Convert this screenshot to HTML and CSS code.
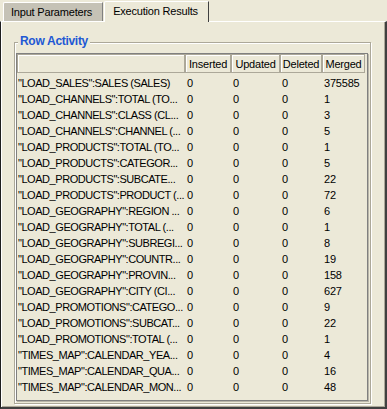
FILE: index.html
```html
<!DOCTYPE html>
<html lang="en">
<head>
  <meta charset="UTF-8">
  <title>Execution Results</title>
  <link rel="stylesheet" href="styles.css">
</head>
<body>
  <div class="tabs">
    <div class="tab">Input Parameters</div>
    <div class="tab tab-active">Execution Results</div>
  </div>

  <div class="panel">
    <div class="group">
      <div class="group-title">Row Activity</div>
      <div class="grid-wrap">
        <table class="grid">
          <thead>
            <tr>
              <th class="c-name"></th>
              <th class="c-ins">Inserted</th>
              <th class="c-upd">Updated</th>
              <th class="c-del">Deleted</th>
              <th class="c-mrg">Merged</th>
            </tr>
          </thead>
          <tbody>
            <tr><td>"LOAD_SALES":SALES (SALES)</td><td>0</td><td>0</td><td>0</td><td>375585</td></tr>
            <tr><td>"LOAD_CHANNELS":TOTAL (TO...</td><td>0</td><td>0</td><td>0</td><td>1</td></tr>
            <tr><td>"LOAD_CHANNELS":CLASS (CL...</td><td>0</td><td>0</td><td>0</td><td>3</td></tr>
            <tr><td>"LOAD_CHANNELS":CHANNEL (...</td><td>0</td><td>0</td><td>0</td><td>5</td></tr>
            <tr><td>"LOAD_PRODUCTS":TOTAL (TO...</td><td>0</td><td>0</td><td>0</td><td>1</td></tr>
            <tr><td>"LOAD_PRODUCTS":CATEGOR...</td><td>0</td><td>0</td><td>0</td><td>5</td></tr>
            <tr><td>"LOAD_PRODUCTS":SUBCATE...</td><td>0</td><td>0</td><td>0</td><td>22</td></tr>
            <tr><td>"LOAD_PRODUCTS":PRODUCT (...</td><td>0</td><td>0</td><td>0</td><td>72</td></tr>
            <tr><td>"LOAD_GEOGRAPHY":REGION ...</td><td>0</td><td>0</td><td>0</td><td>6</td></tr>
            <tr><td>"LOAD_GEOGRAPHY":TOTAL (...</td><td>0</td><td>0</td><td>0</td><td>1</td></tr>
            <tr><td>"LOAD_GEOGRAPHY":SUBREGI...</td><td>0</td><td>0</td><td>0</td><td>8</td></tr>
            <tr><td>"LOAD_GEOGRAPHY":COUNTR...</td><td>0</td><td>0</td><td>0</td><td>19</td></tr>
            <tr><td>"LOAD_GEOGRAPHY":PROVIN...</td><td>0</td><td>0</td><td>0</td><td>158</td></tr>
            <tr><td>"LOAD_GEOGRAPHY":CITY (CI...</td><td>0</td><td>0</td><td>0</td><td>627</td></tr>
            <tr><td>"LOAD_PROMOTIONS":CATEGO...</td><td>0</td><td>0</td><td>0</td><td>9</td></tr>
            <tr><td>"LOAD_PROMOTIONS":SUBCAT...</td><td>0</td><td>0</td><td>0</td><td>22</td></tr>
            <tr><td>"LOAD_PROMOTIONS":TOTAL (...</td><td>0</td><td>0</td><td>0</td><td>1</td></tr>
            <tr><td>"TIMES_MAP":CALENDAR_YEA...</td><td>0</td><td>0</td><td>0</td><td>4</td></tr>
            <tr><td>"TIMES_MAP":CALENDAR_QUA...</td><td>0</td><td>0</td><td>0</td><td>16</td></tr>
            <tr><td>"TIMES_MAP":CALENDAR_MON...</td><td>0</td><td>0</td><td>0</td><td>48</td></tr>
          </tbody>
        </table>
      </div>
    </div>
  </div>
</body>
</html>
```

FILE: styles.css
```css
body {
  margin: 0;
  width: 387px;
  height: 409px;
  overflow: hidden;
  background: #ECE9D8;
  font-family: "Liberation Sans", Arial, sans-serif;
  font-size: 11px;
  letter-spacing: -0.2px;
  color: #000;
}
.tabs {
  display: flex;
  align-items: flex-end;
  height: 21px;
  padding-left: 3px;
}
.tab {
  height: 19px;
  box-sizing: border-box;
  padding: 1px 10px 0 7px;
  line-height: 17px;
  background: #C5C2B6;
  border: 1px solid #fff;
  border-bottom: none;
  border-right-color: #808080;
  border-top-left-radius: 2px;
  white-space: nowrap;
}
.tab-active {
  position: relative;
  height: 21px;
  margin-left: 1px;
  margin-bottom: -1px;
  padding: 1px 10px 2px 8px;
  background: #ECE9D8;
  border-right-color: #404040;
}
.panel {
  height: 388px;
  box-sizing: border-box;
  padding: 0 13px;
  border-top: 1px solid #fff;
  border-left: 1px solid #1E1E1E;
  border-right: 2px solid #404040;
  border-bottom: 2px solid #404040;
  box-shadow: inset 1px 0 #fff, inset -1px -1px #ACA899;
}
.group {
  display: flex;
  flex-direction: column;
  align-items: flex-start;
  margin-top: 20px;
  width: 357px;
  height: 362px;
  box-sizing: border-box;
  border: 1px solid #ACA899;
  box-shadow: inset 1px 1px #fff, 1px 1px #fff;
}
.group-title {
  margin: -9px 0 0 3px;
  padding: 0 2px;
  background: #ECE9D8;
  color: #2158D4;
  font-weight: bold;
  font-size: 12px;
  letter-spacing: -0.3px;
  line-height: 15px;
}
.grid-wrap {
  margin: 4px 0 0 1px;
  width: 352px;
  height: 348px;
  box-sizing: border-box;
  border: 1px solid #808080;
  box-shadow: 1px 1px #B9B6A9;
}
.grid {
  border-spacing: 0;
  table-layout: fixed;
  width: 348px;
}
.grid th {
  height: 19px;
  box-sizing: border-box;
  padding: 3px 0 0;
  line-height: 12px;
  font-weight: normal;
  text-align: center;
  vertical-align: top;
  border: 1px solid #ACA899;
  box-shadow: inset 1px 1px #fff;
}
.grid td {
  height: 16px;
  box-sizing: border-box;
  padding: 4px 0 0 2px;
  line-height: 12px;
  white-space: nowrap;
  vertical-align: top;
}
.grid td:first-child {
  padding-left: 1px;
  letter-spacing: -0.45px;
}
.c-name { width: 168px; }
.c-ins { width: 46px; }
.c-upd { width: 49px; }
.c-del { width: 42px; }
.c-mrg { width: 43px; }
```
